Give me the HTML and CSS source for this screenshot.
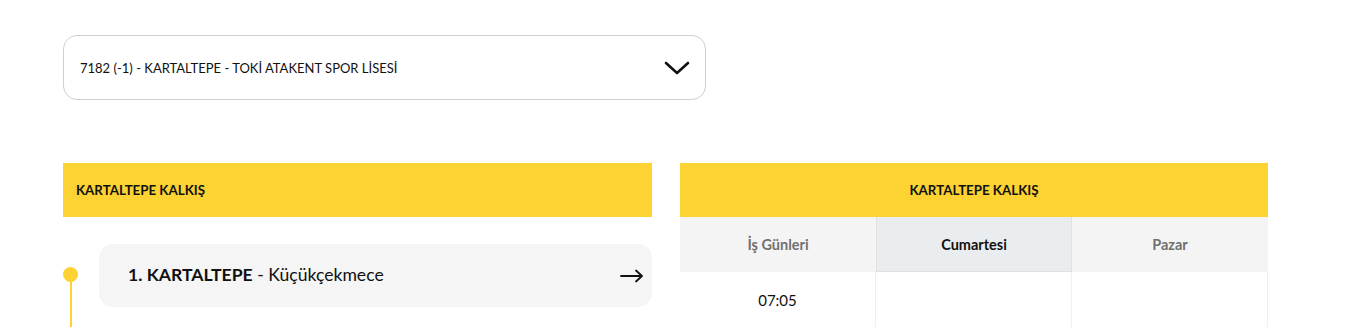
FILE: index.html
```html
<!DOCTYPE html>
<html lang="tr">
<head>
  <meta charset="UTF-8" />
  <title>Sefer Saatleri</title>
  <link rel="stylesheet" href="styles.css">
</head>
<body>
  <div class="page">
    <div class="line-select">
      <span>7182 (-1) - KARTALTEPE - TOKİ ATAKENT SPOR LİSESİ</span>
      <svg class="chevron" width="26" height="16" viewBox="0 0 26 16">
        <path d="M2 3 L13 13 L24 3" fill="none" stroke="#111" stroke-width="2.6" stroke-linecap="round" stroke-linejoin="round" />
      </svg>
    </div>

    <div class="columns">
      <div class="col">
        <div class="yellow-head">KARTALTEPE KALKIŞ</div>
        <div class="stops">
          <div class="stop">
            <div class="stop-mark">
              <span class="dot"></span>
              <span class="stem"></span>
            </div>
            <div class="stop-card">
              <span><b>1. KARTALTEPE</b> - Küçükçekmece</span>
              <svg width="24" height="14" viewBox="0 0 24 14">
                <path d="M1 7 H22 M16 1.5 L22 7 L16 12.5" fill="none" stroke="#111" stroke-width="1.8" stroke-linecap="round" stroke-linejoin="round" />
              </svg>
            </div>
          </div>
        </div>
      </div>

      <div class="col">
        <div class="yellow-head center">KARTALTEPE KALKIŞ</div>
        <div class="tabs">
          <div class="tab">İş Günleri</div>
          <div class="tab active">Cumartesi</div>
          <div class="tab">Pazar</div>
        </div>
        <div class="times">
          <div class="cell">07:05</div>
          <div class="cell"></div>
          <div class="cell"></div>
        </div>
      </div>
    </div>
  </div>
</body>
</html>
```

FILE: styles.css
```css
* {
  box-sizing: border-box;
}

body {
  margin: 0;
  font-family: "Lato", "Noto Sans", sans-serif;
  background-color: #ffffff;
  color: #111;
}

.page {
  width: 1205px;
  margin-left: 63px;
  padding-top: 35px;
}

.line-select {
  width: 643px;
  height: 65px;
  border: 1px solid #cfcfcf;
  border-radius: 14px;
  display: flex;
  align-items: center;
  justify-content: space-between;
  padding: 0 15px 0 16px;
  font-size: 13px;
}

.columns {
  display: grid;
  grid-template-columns: 589px 588px;
  gap: 28px;
  margin-top: 63px;
}

.yellow-head {
  height: 54px;
  background-color: #fcd332;
  display: flex;
  align-items: center;
  padding: 0 13px;
  font-size: 13.3px;
  font-weight: bold;
}

.yellow-head.center {
  justify-content: center;
}

.stops {
  padding-top: 27px;
}

.stop {
  display: flex;
}

.stop-mark {
  width: 36px;
  display: flex;
  flex-direction: column;
  align-items: flex-start;
  padding-top: 23px;
}

.dot {
  width: 15px;
  height: 15px;
  border-radius: 50%;
  background: #fcd332;
}

.stem {
  width: 2px;
  height: 60px;
  margin-left: 6.5px;
  background: #fcd332;
}

.stop-card {
  flex-grow: 1;
  height: 63px;
  background: #f5f5f5;
  border-radius: 14px;
  display: flex;
  align-items: center;
  justify-content: space-between;
  padding: 0 8px 3px 29px;
  font-size: 17.6px;
}

.stop-card svg {
  margin-top: 3px;
}

.tabs,
.times {
  display: grid;
  grid-template-columns: 196px 196px 196px;
}

.tab {
  height: 55px;
  background: #f4f4f4;
  display: flex;
  align-items: center;
  justify-content: center;
  font-size: 14.5px;
  font-weight: bold;
  color: #707070;
}

.tab.active {
  background: #eaedf0;
  color: #111;
  border-left: 1px solid #dfe2e5;
  border-right: 1px solid #dfe2e5;
  border-bottom: 1px solid #dfe2e5;
}

.cell {
  height: 56px;
  display: flex;
  align-items: center;
  justify-content: center;
  font-size: 15px;
  border-right: 1px solid #f0f0f0;
}
```
